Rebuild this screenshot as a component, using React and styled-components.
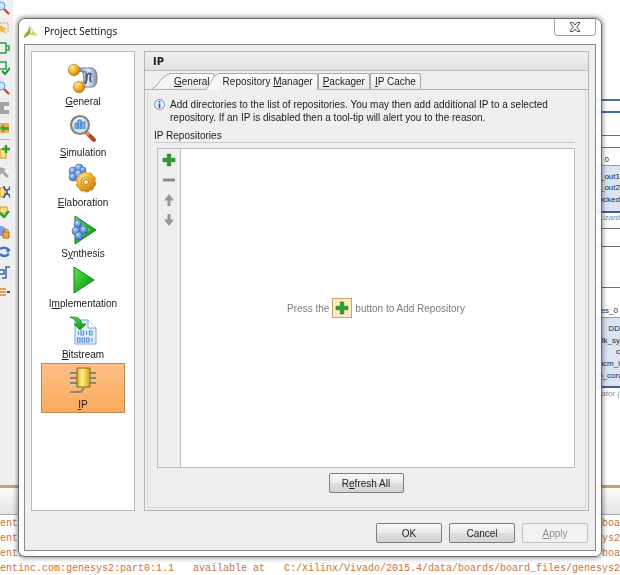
import React, { useState } from "react";
import styled, { createGlobalStyle, css } from "styled-components";

const GlobalStyle = createGlobalStyle`
  * {
    box-sizing: border-box;
  }
  body {
    margin: 0;
    background: #fff;
    color: #1c1c1c;
    font-family: "Liberation Sans", sans-serif;
    font-size: 10px;
    line-height: 13px;
  }
  button {
    font: inherit;
    color: inherit;
    padding: 0;
    margin: 0;
  }
`;

/* ---------- workspace behind the dialog ---------- */

const Workspace = styled.div`
  position: relative;
  min-height: 100vh;
  padding: 18px;
  overflow: hidden;
`;

const Backdrop = styled.div`
  position: absolute;
  inset: 0;
  display: flex;
  flex-direction: column;
`;

const Desktop = styled.div`
  flex: 1;
  display: flex;
  justify-content: space-between;
  min-height: 0;
`;

const SideTools = styled.div`
  width: 13px;
  background: #efefef;
  display: flex;
  flex-direction: column;
  gap: 4px;
`;

const ToolGlyph = styled.svg`
  display: block;
  flex: none;
  width: 10px;
  height: 16px;
`;

const ToolRule = styled.hr`
  width: 10px;
  height: 1px;
  margin: -1px 0 0;
  border: 0;
  background: #b4b4b4;
`;

const Canvas = styled.div`
  position: relative;
  width: 30px;
`;

const Wire = styled.div`
  position: absolute;
  left: 0;
  right: 0;
  top: ${(props) => props.$top}px;
  height: ${(props) => (props.$bus ? 2 : 1)}px;
  background: ${(props) => (props.$bus ? "#4a6fa5" : "#707070")};
`;

const Block = styled.div`
  position: absolute;
  left: 0;
  right: 0;
  top: ${(props) => props.$top}px;
  height: ${(props) => props.$height}px;
  background: #dae5f4;
  border-top: 1px solid #8d9cb4;
  border-bottom: 2px solid #44618e;
`;

const Pin = styled.span`
  position: absolute;
  right: ${(props) => props.$right || 0}px;
  top: ${(props) => props.$top}px;
  font-size: 8px;
  line-height: 10px;
  white-space: nowrap;
  color: ${(props) => (props.$muted ? "#7387a8" : "#1e2633")};
  font-style: ${(props) => (props.$muted ? "italic" : "normal")};
`;

const ConsoleBar = styled.div`
  height: 30px;
  border-top: 3px solid #c9a273;
  border-bottom: 1px solid #a9a9a9;
  background: linear-gradient(#fdfdfd, #e4e4e6);
`;

const Console = styled.div`
  height: 60px;
  padding-top: 1px;
  background: #fff;
  color: #c9733a;
  font-family: "Liberation Mono", monospace;
  font-size: 10px;
  line-height: 15px;
`;

const LogLine = styled.div`
  display: flex;
  justify-content: space-between;
  white-space: nowrap;
`;

/* ---------- dialog ---------- */

const Dialog = styled.section`
  position: relative;
  display: flex;
  flex-direction: column;
  min-height: calc(100vh - 36px);
  padding: 0 5px 5px;
  border: 1px solid #6c6c6c;
  border-radius: 7px;
  background: rgba(255, 255, 255, 0.8);
  backdrop-filter: blur(2px);
  box-shadow: 0 0 5px 1px rgba(0, 0, 0, 0.45);
`;

const TitleBar = styled.header`
  display: flex;
  align-items: flex-start;
  height: 25px;
`;

const Logo = styled.svg`
  width: 14px;
  height: 14px;
  margin: 5px 6px 0 0;
`;

const WindowTitle = styled.h1`
  flex: 1;
  margin: 4px 0 0;
  font-family: "Noto Sans", sans-serif;
  font-size: 10px;
  font-weight: 400;
  line-height: 16px;
  color: #1a1a1a;
`;

const CloseButton = styled.button`
  display: flex;
  align-items: center;
  justify-content: center;
  width: 42px;
  height: 17px;
  border: 1px solid #a5a5a5;
  border-top: 0;
  border-radius: 0 0 4px 4px;
  background: #fff;
`;

const Body = styled.div`
  flex: 1;
  display: flex;
  flex-direction: column;
  padding: 6px;
  border: 1px solid #8a8a8a;
  background: #efefef;
`;

const Columns = styled.div`
  flex: 1;
  display: flex;
  gap: 9px;
`;

const Sidebar = styled.nav`
  width: 104px;
  padding: 8px 9px;
  border: 1px solid #b9b9b9;
  background: #fff;
`;

const Categories = styled.ul`
  display: flex;
  flex-direction: column;
  justify-content: space-between;
  height: 353px;
  margin: 0;
  padding: 0;
  list-style: none;
`;

const Category = styled.button`
  display: flex;
  flex-direction: column;
  align-items: center;
  justify-content: space-between;
  width: 84px;
  height: 50px;
  padding: 1px 0;
  border: 1px solid transparent;
  background: none;
  ${(props) =>
    props.$active &&
    css`
      border-color: #c08a50;
      background: linear-gradient(#fdc088, #fbab5c);
    `}
`;

const Picture = styled.svg`
  display: block;
  width: 32px;
  height: 32px;
`;

const Panel = styled.section`
  flex: 1;
  display: flex;
  flex-direction: column;
  min-width: 0;
  border: 1px solid #b5b5b5;
`;

const PanelTitle = styled.h2`
  height: 19px;
  margin: 0;
  padding-left: 8px;
  border-bottom: 1px solid #bcbcbc;
  background: linear-gradient(#f2f2f4, #e0e0e3);
  font-family: "DejaVu Sans Condensed", sans-serif;
  font-size: 11px;
  line-height: 19px;
`;

const TabBar = styled.div`
  display: flex;
  align-items: flex-end;
  height: 19px;
  padding-left: 21px;
  border-bottom: 1px solid #b0b0b0;
`;

const Tab = styled.button`
  position: relative;
  z-index: ${(props) => (props.$active ? 1 : 0)};
  height: ${(props) => (props.$active ? 17 : 16)}px;
  margin: 0 0 ${(props) => (props.$active ? -1 : 0)}px ${(props) => (props.$lead ? 4 : 0)}px;
  padding: 0 4px ${(props) => (props.$active ? 1 : 0)}px;
  border: 1px solid #a9a9a9;
  border-bottom: 0;
  border-left-width: ${(props) => (props.$lead ? 0 : 1)}px;
  border-radius: 0 3px 0 0;
  background: ${(props) =>
    props.$active ? "linear-gradient(#fff, #efefef)" : "linear-gradient(#fdfdfd, #e9e9e9)"};
  line-height: 15px;
  white-space: nowrap;
`;

const TabSlope = styled.svg`
  position: absolute;
  right: 100%;
  top: -1px;
  width: ${(props) => props.$width}px;
  height: ${(props) => (props.$tall ? 17 : 16)}px;
`;

const TabBody = styled.div`
  flex: 1;
  display: flex;
  flex-direction: column;
  margin: 0 2px 2px;
  padding: 8px 10px 14px 6px;
  border: 1px solid #d6d6d6;
  border-top: 0;
`;

const Hint = styled.p`
  display: flex;
  gap: 5px;
  margin: 0 0 5px;
`;

const InfoIcon = styled.svg`
  flex: none;
  width: 11px;
  height: 13px;
`;

const GroupTitle = styled.h3`
  margin: 0 0 5px;
  border-bottom: 1px solid #c9c9c9;
  font-size: 10px;
  font-weight: 400;
`;

const Repositories = styled.div`
  flex: 1;
  display: flex;
  margin-left: 3px;
  border: 1px solid #bdbdbd;
  background: #fff;
`;

const RepoTools = styled.div`
  display: flex;
  flex-direction: column;
  align-items: center;
  gap: 4px;
  width: 23px;
  padding-top: 3px;
  border-right: 1px solid #bdbdbd;
  background: #efefef;
`;

const RepoTool = styled.button`
  width: 16px;
  height: 16px;
  border: 0;
  background: none;
  svg {
    display: block;
  }
`;

const EmptyNote = styled.div`
  flex: 1;
  display: flex;
  align-items: center;
  justify-content: center;
  gap: 3px;
  padding-right: 3px;
  color: #7c7c7c;
`;

const AddBadge = styled.span`
  display: flex;
  align-items: center;
  justify-content: center;
  width: 20px;
  height: 20px;
  border: 1px solid #c9a26b;
  background: #fbe9c4;
`;

const PushButton = styled.button`
  width: ${(props) => props.$width}px;
  height: 20px;
  border: 1px solid #7d7d7d;
  border-radius: 2px;
  background: linear-gradient(#f6f6f6, #ececec 50%, #dedede 51%, #d4d4d4);
  &:disabled {
    border-color: #c2c2c2;
    background: #f2f2f2;
    color: #929292;
  }
`;

const RefreshRow = styled.div`
  display: flex;
  justify-content: center;
  padding: 5px 0 0 3px;
`;

const Footer = styled.footer`
  display: flex;
  justify-content: flex-end;
  gap: 7px;
  padding: 12px 1px 1px;
`;

const Swatches = styled.svg`
  position: absolute;
  width: 0;
  height: 0;
`;

/* underlines the mnemonic letter of a label */
const Mnemonic = ({ text, at }) => (
  <span>
    {text.slice(0, at)}
    <u>{text[at]}</u>
    {text.slice(at + 1)}
  </span>
);

const Plus = () => (
  <svg width="16" height="16" viewBox="0 0 16 16">
    <path d="M6.300 2h3.400v4.300H14v3.400H9.700V14H6.300V9.700H2V6.300h4.300z" fill="#2aa02a" stroke="#177a1c" strokeWidth=".6" />
  </svg>
);

const Minus = () => (
  <svg width="16" height="16" viewBox="0 0 16 16">
    <path d="M2 6.500h12v3H2z" fill="#8e8e8e" />
  </svg>
);

const Arrow = ({ down }) => (
  <svg width="16" height="16" viewBox="0 0 16 16">
    <path
      d={down ? "M6.500 2h3v5.500H13L8 14 3 7.500h3.500z" : "M6.500 14h3V8.500H13L8 2 3 8.500h3.500z"}
      fill="#979797"
    />
  </svg>
);

const Gradients = () => (
  <Swatches aria-hidden="true">
    <defs>
      <radialGradient id="gold" cx=".35" cy=".3" r=".8">
        <stop offset="0" stopColor="#ffe9a0" />
        <stop offset=".5" stopColor="#f2b02c" />
        <stop offset="1" stopColor="#b8730c" />
      </radialGradient>
      <radialGradient id="blue" cx=".35" cy=".3" r=".8">
        <stop offset="0" stopColor="#c4dcfa" />
        <stop offset=".5" stopColor="#6a9be0" />
        <stop offset="1" stopColor="#2f5fae" />
      </radialGradient>
      <linearGradient id="green" x1="0" y1="0" x2="1" y2="1">
        <stop offset="0" stopColor="#6ee05a" />
        <stop offset=".5" stopColor="#25bb25" />
        <stop offset="1" stopColor="#0d8a14" />
      </linearGradient>
      <linearGradient id="steel">
        <stop offset="0" stopColor="#8fa4c0" />
        <stop offset=".5" stopColor="#e6edf6" />
        <stop offset="1" stopColor="#7e8ea6" />
      </linearGradient>
      <linearGradient id="chip">
        <stop offset="0" stopColor="#d9b21c" />
        <stop offset=".4" stopColor="#fff08a" />
        <stop offset="1" stopColor="#cfa312" />
      </linearGradient>
    </defs>
  </Swatches>
);

const drawings = {
  general: (
    <>
      <path d="M12 6h13q5 1 5 10t-5 9H14q3-3 3-9t-5-10z" fill="url(#steel)" stroke="#6e7f98" />
      <path d="M8 8l11 2v9l-8 5" fill="none" stroke="#7c8ba2" strokeWidth="2" />
      <path d="M18 22q2-2 2-8 1-4 4-2-2 5 0 8" fill="none" stroke="#3f587e" strokeWidth="1.600" />
      <circle cx="7" cy="8" r="5.800" fill="url(#gold)" stroke="#b0761c" strokeWidth=".6" />
      <circle cx="12" cy="25" r="5.800" fill="url(#gold)" stroke="#b0761c" strokeWidth=".6" />
    </>
  ),
  simulation: (
    <>
      <path d="M20 20l7 7" stroke="#b4472a" strokeWidth="4" strokeLinecap="round" />
      <path d="M19 19l3 3" stroke="#d9a94a" strokeWidth="3" />
      <circle cx="13" cy="12" r="9" fill="#cfe4f8" stroke="#8b8474" strokeWidth="2.200" />
      <path d="M8 16v-6h3v6M11 16V7h3v9M14 16V9h4v7" fill="#7fb0e8" stroke="#3f7fcc" strokeWidth=".8" />
      <path d="M6 10q3-5 8-5" stroke="#fff" fill="none" />
    </>
  ),
  elaboration: (
    <>
      <g fill="url(#blue)" stroke="#3f69ad" strokeWidth=".6">
        <circle cx="6" cy="8" r="4" />
        <circle cx="12" cy="5" r="4" />
        <circle cx="6" cy="14" r="4" />
        <circle cx="12" cy="11" r="4.500" />
        <circle cx="16" cy="7" r="3" />
      </g>
      <circle cx="19" cy="19" r="9.600" fill="none" stroke="#d8982c" strokeWidth="1.600" strokeDasharray="4 2" />
      <circle cx="19" cy="19" r="9.600" fill="url(#gold)" />
      <circle cx="19" cy="19" r="5" fill="none" stroke="#d98f18" strokeWidth="1.200" />
      <circle cx="19" cy="19" r="2.500" fill="#fff7dc" stroke="#b5740e" />
    </>
  ),
  synthesis: (
    <>
      <path d="M8 2l21 14L8 30z" fill="url(#green)" stroke="#14801c" />
      <path d="M11 8l12 8-12 8z" fill="#9be38e" />
      <g fill="url(#blue)" stroke="#3f69ad" strokeWidth=".6">
        <circle cx="11" cy="10" r="4" />
        <circle cx="17" cy="16" r="4" />
        <circle cx="9" cy="17" r="4" />
        <circle cx="12" cy="22" r="4" />
      </g>
    </>
  ),
  implementation: <path d="M7 3l20 13L7 29z" fill="url(#green)" stroke="#0f8418" />,
  bitstream: (
    <>
      <path d="M8 5h13l8 8v16H8z" fill="#e2effc" stroke="#7ba7dc" />
      <path d="M21 5v8h8" fill="#fff" stroke="#7ba7dc" />
      <g fill="none" stroke="#5b8fd0" strokeWidth="1.200">
        <path d="M11.500 16v4M14 16h2.500v4H14zM19.500 16v4M22.500 16H25v4h-2.500z" />
        <path d="M10.500 23h2.500v4h-2.500zM15 23h2.500v4H15zM19.500 23H22v4h-2.500zM25 23v4" />
      </g>
      <path d="M3 2q11-1 12 7h4l-6 6-6-6h3q0-4-7-7z" fill="url(#green)" stroke="#188a1c" strokeWidth=".8" />
    </>
  ),
  ip: (
    <>
      <g fill="none" stroke="#8c8474" strokeWidth="2">
        <path d="M3 8h8M3 13h8M3 18h8M22 8h7M22 13h7M22 18h7M3 27h11l3-4" />
      </g>
      <path d="M3 9.500h8M3 14.500h8M3 19.500h8M22 9.500h7M22 14.500h7M3 28.500h11" stroke="#d8ccb4" />
      <path d="M10 3h13v19H10z" fill="url(#chip)" stroke="#8a6d12" />
    </>
  ),
};

const categories = [
  { id: "general", label: "General", at: 0 },
  { id: "simulation", label: "Simulation", at: 0 },
  { id: "elaboration", label: "Elaboration", at: 0 },
  { id: "synthesis", label: "Synthesis", at: 1 },
  { id: "implementation", label: "Implementation", at: 1 },
  { id: "bitstream", label: "Bitstream", at: 0 },
  { id: "ip", label: "IP", at: 0 },
];

const tabs = [
  { label: "General", at: 0, slope: 18 },
  { label: "Repository Manager", at: 11, slope: 14 },
  { label: "Packager", at: 0 },
  { label: "IP Cache", at: 0 },
];

const toolGlyphs = [
  <><circle cx="1" cy="6" r="4" fill="#cfe6fa" stroke="#5b9bd5" /><path d="M4 9l5 5" stroke="#c0392b" strokeWidth="2" /></>,
  <><path d="M0 3h8v10" fill="none" stroke="#d0a040" strokeDasharray="2 1" /><path d="M0 5l7 4-3 1 3 4-7-3z" fill="#f0b64a" /></>,
  <><path d="M0 3h6v10H0M6 6h3v4H6" fill="#e9f8ea" stroke="#2f9e4a" strokeWidth="1.500" /></>,
  <><path d="M0 2h6v7H0" fill="#e9f8ea" stroke="#2f9e4a" strokeWidth="1.500" /><path d="M2 11l3 3 5-6" fill="none" stroke="#1f9a2f" strokeWidth="2" /></>,
  <><circle cx="1" cy="6" r="4" fill="#cfe6fa" stroke="#5b9bd5" /><path d="M4 9l5 5" stroke="#c0392b" strokeWidth="2" /></>,
  <><path d="M0 2h9v4H0zM0 10h9v4H0zM0 6h4v4H0z" fill="#a2a2a2" /></>,
  <><path d="M0 3h9v10H0z" fill="#e8b25a" /><path d="M0 8l4-4v3h5v3H4v3z" fill="#3ea53a" /></>,
  null,
  <><path d="M0 5h6v9H0z" fill="#fbe28a" stroke="#c99a1e" /><path d="M6 1v8M2 5h8" stroke="#2aa02a" strokeWidth="2.500" /></>,
  <><path d="M0 3l6 2-2 2 5 5-2 2-5-5-2 2z" fill="#a6a6a6" /></>,
  <><path d="M0 4h5v9H0z" fill="#fbe28a" stroke="#c99a1e" /><path d="M4 2q0 4 3 4 3 0 3-4M7 6v5M4 14q0-4 3-4 3 0 3 4" fill="none" stroke="#2c4f90" strokeWidth="1.500" /></>,
  <><path d="M0 3h7v6H0z" fill="#fbe28a" stroke="#c99a1e" /><path d="M0 9l4 4 5-6" fill="none" stroke="#2aa02a" strokeWidth="2.500" /></>,
  <><circle cx="1" cy="7" r="5" fill="#7d9fd6" /><path d="M3 8h6v6H3z" fill="#f2a93c" stroke="#b26f14" /><path d="M4 8V6q2-2 4 0v2" fill="none" stroke="#b26f14" /></>,
  <><path d="M0 5q5-3 9 1l-2 2M9 10q-5 4-9 0" fill="none" stroke="#3f77c8" strokeWidth="2.500" /></>,
  <><path d="M0 6h4v4H0M2 14h4V3h4" fill="none" stroke="#3f66a8" strokeWidth="1.500" /></>,
  <><path d="M0 5h6M0 8h6M0 11h6" stroke="#e0a050" strokeWidth="2" /><path d="M7 8h3" stroke="#804020" strokeWidth="2" /></>,
];

const SettingsDialog = () => {
  const [category, setCategory] = useState("ip");
  const [tab, setTab] = useState("Repository Manager");

  return (
    <Dialog role="dialog" aria-labelledby="dialog-title">
      <TitleBar>
        <Logo viewBox="0 0 14 14">
          <path d="M5 0l8 12-4-1z" fill="#d8e58e" />
          <path d="M5 2q3 5 0 9l-5 3q0-4 3-6 2-2 2-6z" fill="#8faa1e" />
          <path d="M4 11h10l-5-3z" fill="#c4d66a" />
        </Logo>
        <WindowTitle id="dialog-title">Project Settings</WindowTitle>
        <CloseButton aria-label="Close">
          <svg width="12" height="10" viewBox="0 0 12 10">
            <path
              d="M1 .5h3L6 3l2-2.500h3L7.800 5 11 9.500H8L6 7 4 9.500H1L4.200 5z"
              fill="#fff"
              stroke="#555"
            />
          </svg>
        </CloseButton>
      </TitleBar>

      <Body>
        <Columns>
          <Sidebar>
            <Categories>
              {categories.map((item) => (
                <li key={item.id}>
                  <Category
                    $active={item.id === category}
                    onClick={() => setCategory(item.id)}
                  >
                    <Picture viewBox="0 0 32 32">{drawings[item.id]}</Picture>
                    <Mnemonic text={item.label} at={item.at} />
                  </Category>
                </li>
              ))}
            </Categories>
          </Sidebar>

          <Panel>
            <PanelTitle>IP</PanelTitle>
            <TabBar role="tablist">
              {tabs.map((item) => {
                const active = item.label === tab;
                return (
                  <Tab
                    key={item.label}
                    role="tab"
                    aria-selected={active}
                    $active={active}
                    $lead={Boolean(item.slope)}
                    onClick={() => setTab(item.label)}
                  >
                    {item.slope && (
                      <TabSlope
                        $width={item.slope}
                        $tall={active}
                        viewBox="0 0 18 16"
                        preserveAspectRatio="none"
                      >
                        <path d="M0 16Q4 14 8 8T18 .5V16z" fill={active ? "#f8f8f8" : "#f3f3f3"} />
                        <path d="M0 16Q4 14 8 8T18 .5" fill="none" stroke="#a9a9a9" />
                      </TabSlope>
                    )}
                    <Mnemonic text={item.label} at={item.at} />
                  </Tab>
                );
              })}
            </TabBar>

            <TabBody>
              <Hint>
                <InfoIcon viewBox="0 0 11 13">
                  <circle cx="5.500" cy="6.500" r="5" fill="#e3effb" stroke="#6d94bd" />
                  <path d="M5.500 3v1.600M5.500 5.600V10" stroke="#1f5c9e" strokeWidth="1.600" />
                </InfoIcon>
                <span>
                  Add directories to the list of repositories. You may then add additional IP to a selected
                  <br />
                  repository. If an IP is disabled then a tool-tip will alert you to the reason.
                </span>
              </Hint>
              <GroupTitle>IP Repositories</GroupTitle>
              <Repositories>
                <RepoTools>
                  <RepoTool aria-label="Add"><Plus /></RepoTool>
                  <RepoTool aria-label="Remove"><Minus /></RepoTool>
                  <RepoTool aria-label="Move up"><Arrow /></RepoTool>
                  <RepoTool aria-label="Move down"><Arrow down /></RepoTool>
                </RepoTools>
                <EmptyNote>
                  Press the
                  <AddBadge><Plus /></AddBadge>
                  button to Add Repository
                </EmptyNote>
              </Repositories>
              <RefreshRow>
                <PushButton $width={75}>
                  <Mnemonic text="Refresh All" at={1} />
                </PushButton>
              </RefreshRow>
            </TabBody>
          </Panel>
        </Columns>

        <Footer>
          <PushButton $width={66}>OK</PushButton>
          <PushButton $width={66}>Cancel</PushButton>
          <PushButton $width={66} disabled>
            <Mnemonic text="Apply" at={0} />
          </PushButton>
        </Footer>
      </Body>
    </Dialog>
  );
};

const App = () => (
  <Workspace>
    <GlobalStyle />
    <Gradients />
    <Backdrop>
      <Desktop>
        <SideTools>
          {toolGlyphs.map((glyph, index) =>
            glyph ? (
              <ToolGlyph key={index} viewBox="0 0 10 16">{glyph}</ToolGlyph>
            ) : (
              <ToolRule key={index} />
            )
          )}
        </SideTools>
        <Canvas>
          <Wire $top={99} $bus />
          <Wire $top={111} $bus />
          <Wire $top={135} />
          <Wire $top={147} />
          <Pin $top={155} $right={11}>0</Pin>
          <Block $top={165} $height={48} />
          <Pin $top={172}>_out1</Pin>
          <Pin $top={183}>_out2</Pin>
          <Pin $top={195}>ocked</Pin>
          <Pin $top={213} $muted>izard</Pin>
          <Wire $top={228} />
          <Wire $top={246} />
          <Wire $top={287} />
          <Pin $top={306} $right={2}>es_0</Pin>
          <Block $top={317} $height={71} />
          <Pin $top={324}>DD</Pin>
          <Pin $top={336}>lk_sy</Pin>
          <Pin $top={347}>c</Pin>
          <Pin $top={359}>ncm_l</Pin>
          <Pin $top={371}>b_con</Pin>
          <Pin $top={389} $muted>ator (</Pin>
        </Canvas>
      </Desktop>
      <ConsoleBar />
      <Console>
        <LogLine><span>entinc</span><span>boa</span></LogLine>
        <LogLine><span>entinc</span><span>ys2</span></LogLine>
        <LogLine><span>entinc</span><span>boa</span></LogLine>
        <LogLine>
          <span>entinc.com:genesys2:part0:1.1</span>
          <span>available at</span>
          <span>C:/Xilinx/Vivado/2015.4/data/boards/board_files/genesys2</span>
        </LogLine>
      </Console>
    </Backdrop>
    <SettingsDialog />
  </Workspace>
);

export default App;
